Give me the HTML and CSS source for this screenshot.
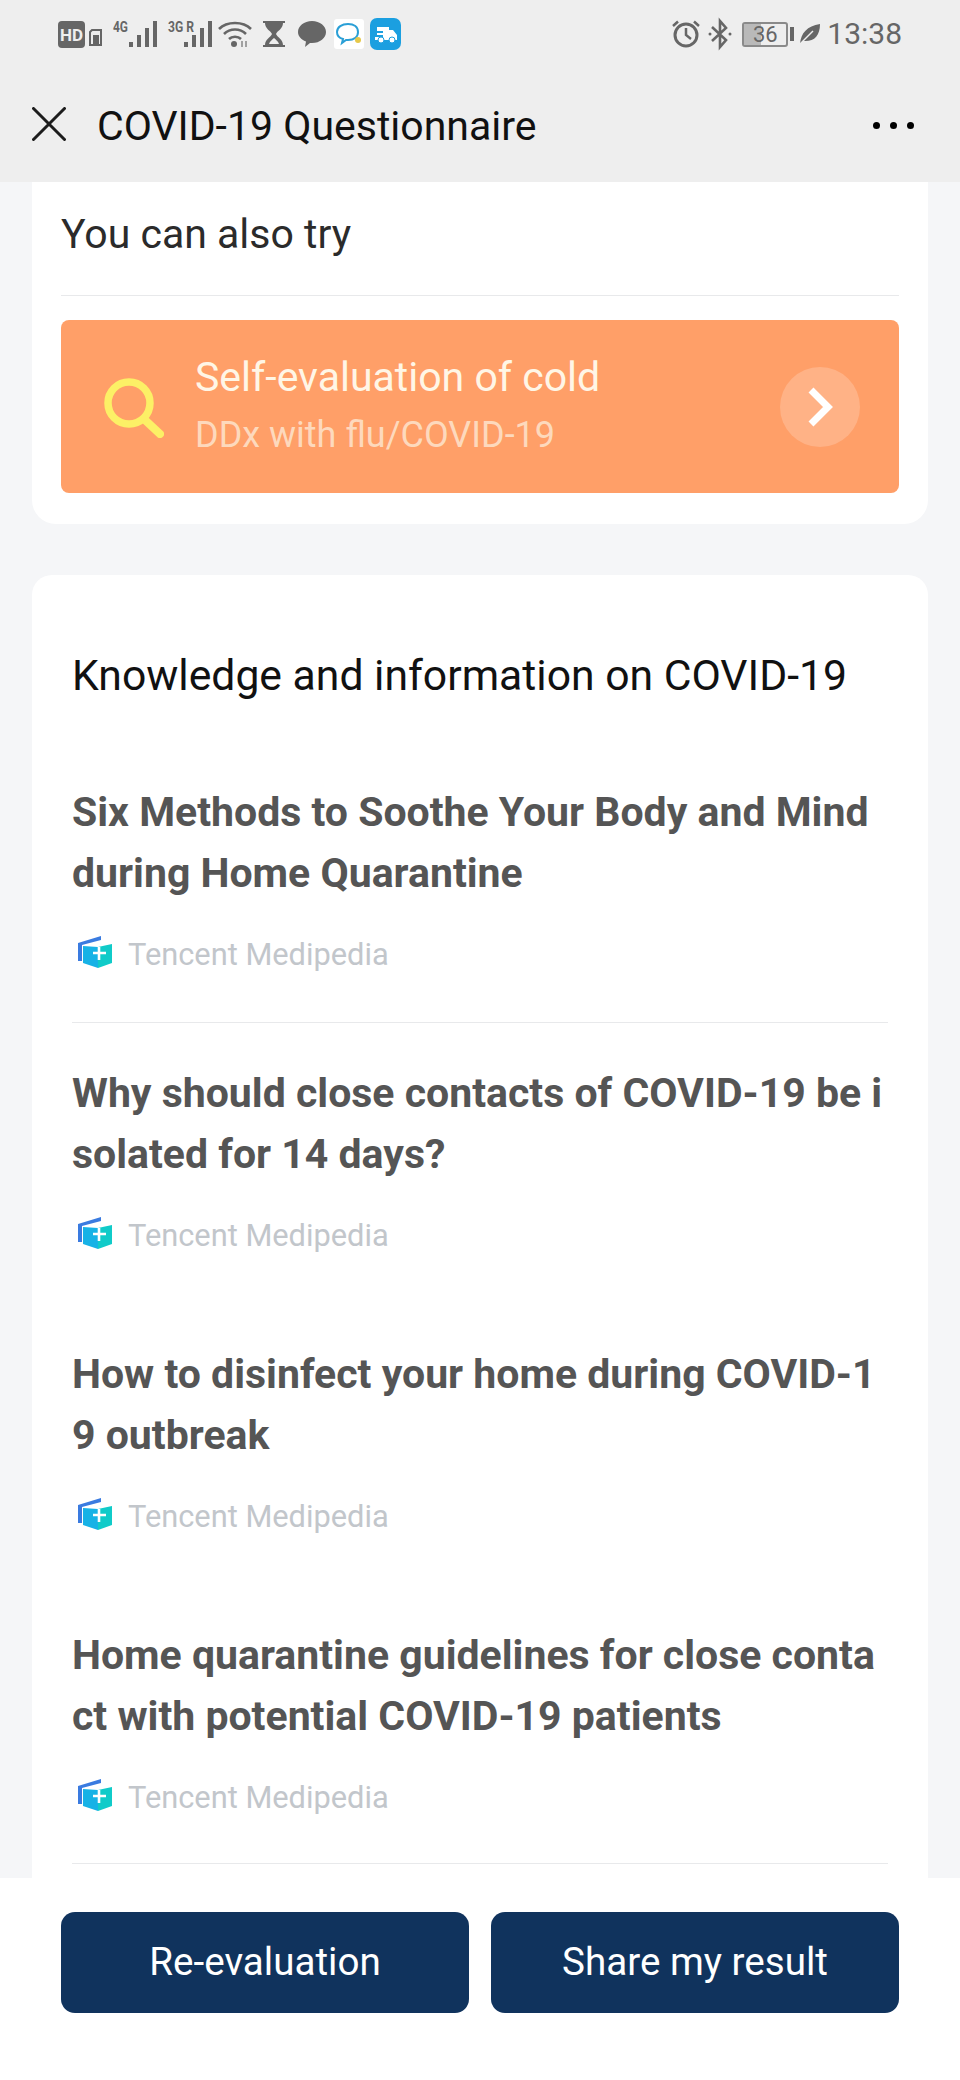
FILE: index.html
```html
<!DOCTYPE html>
<html lang="en">
<head>
<meta charset="utf-8">
<title>COVID-19 Questionnaire</title>
<link rel="stylesheet" href="styles.css">
</head>
<body>
<div class="page">
  <header class="top">
    <div class="status">
      <div class="status-left">
        <svg class="ic" width="27" height="27" viewBox="0 0 27 27"><rect width="27" height="27" rx="4" fill="#666"/><text x="13.5" y="20" class="hd">HD</text></svg>
        <svg class="ic sim" width="13" height="17" viewBox="0 0 13 17"><path d="M1 3 3 1h9v15H1z" fill="none" stroke="#666" stroke-width="2"/><rect x="4" y="6" width="6" height="9" fill="#666"/></svg>
        <svg class="ic net" width="46" height="28" viewBox="0 0 46 28"><text x="0" y="12" class="nt" textLength="15" lengthAdjust="spacingAndGlyphs">4G</text><g fill="#666"><rect x="16" y="22" width="4" height="5"/><rect x="24" y="15" width="4" height="12"/><rect x="32" y="8" width="4" height="19"/><rect x="40" y="1" width="4" height="26"/></g></svg>
        <svg class="ic net2" width="46" height="28" viewBox="0 0 46 28"><text x="0" y="12" class="nt" textLength="26" lengthAdjust="spacingAndGlyphs">3G R</text><g fill="#666"><rect x="16" y="22" width="4" height="5"/><rect x="24" y="15" width="4" height="12"/><rect x="32" y="8" width="4" height="19"/><rect x="40" y="1" width="4" height="26"/></g></svg>
        <svg class="ic wifi" width="34" height="28" viewBox="0 0 34 28"><g fill="none" stroke="#666" stroke-width="2.6"><path d="M1 9C9 1 25 1 33 9"/><path d="M6 14C12 8 22 8 28 14"/><path d="M11 19C14 16 20 16 23 19"/></g><circle cx="16" cy="24" r="3" fill="#666"/><path d="M24 21v6M28 21v6" stroke="#888" stroke-width="1.500"/></svg>
        <svg class="ic glass" width="22" height="28" viewBox="0 0 22 28"><path d="M0 1h22v2h-2c0 6-6 8-7 11 1 3 7 5 7 11h2v2H0v-2h2c0-6 6-8 7-11C8 11 2 9 2 3H0z" fill="#666"/><path d="M6 24c1-3 3-4 5-6 2 2 4 3 5 6z" fill="#eee"/></svg>
        <svg class="ic bubble" width="30" height="28" viewBox="0 0 30 28"><path d="M15 1c8 0 14 5 14 11s-6 11-14 11l-2 0-5 4 1-5.500C4 19.500 1 16 1 12 1 6 7 1 15 1z" fill="#666"/></svg>
        <span class="app-white"><svg width="28" height="24" viewBox="0 0 28 24"><path d="M13 2c6 0 10 3 10 8s-4 8-10 8h-2l-4 3 1-4C4 16 2 13 2 10c0-5 5-8 11-8z" fill="none" stroke="#2a9fd6" stroke-width="2"/><circle cx="23" cy="18" r="3" fill="#e6c84a"/></svg></span>
        <span class="app-blue"><svg width="24" height="20" viewBox="0 0 24 20"><path d="M3 3h12v3h4l4 5v5H1v-3h8v-2H3V9h6V7H3z" fill="#fff"/><circle cx="7" cy="16" r="3" fill="#fff" stroke="#1b9fe0"/><circle cx="18" cy="16" r="3" fill="#fff" stroke="#1b9fe0"/></svg></span>
      </div>
      <div class="status-right">
        <svg class="ic" width="30" height="28" viewBox="0 0 30 28"><circle cx="15" cy="15" r="11" fill="none" stroke="#666" stroke-width="3"/><path d="M15 8v7l5 4" fill="none" stroke="#666" stroke-width="2.500"/><path d="M2 6 7 1.500M28 6l-5-4.500" stroke="#666" stroke-width="2.500"/></svg>
        <svg class="ic bt" width="24" height="30" viewBox="0 0 24 30"><path d="M4 8l14 13-6 7V2l6 7L4 22" fill="none" stroke="#666" stroke-width="2.600"/><circle cx="2" cy="15" r="1.500" fill="#666"/><circle cx="22" cy="15" r="1.500" fill="#666"/></svg>
        <span class="batt"><span class="batt-fill"></span><span class="batt-num">36</span></span>
        <span class="batt-tip"></span>
        <svg class="ic leaf" width="22" height="22" viewBox="0 0 22 22"><path d="M1 21C2 10 8 3 21 1c0 12-6 18-17 17z" fill="#666"/><path d="M1 21 14 8" stroke="#eee" stroke-width="1.500"/></svg>
        <span class="clock">13:38</span>
      </div>
    </div>
    <div class="nav">
      <svg class="close" width="34" height="34" viewBox="0 0 34 34"><path d="M1.500 1.500 32.500 32.500M32.500 1.500 1.500 32.500" stroke="#1c1c1c" stroke-width="3" stroke-linecap="round"/></svg>
      <div class="nav-title">COVID-19 Questionnaire</div>
      <div class="dots"><i></i><i></i><i></i></div>
    </div>
  </header>

  <main class="main">
    <section class="card try">
      <h2 class="try-title">You can also try</h2>
      <div class="promo">
        <svg class="loupe" width="60" height="60" viewBox="0 0 60 60"><circle cx="25" cy="25" r="21" fill="none" stroke="#fcf066" stroke-width="7.500"/><path d="M41 42 56 56" stroke="#fcf066" stroke-width="8" stroke-linecap="round"/></svg>
        <div class="promo-text">
          <div class="promo-main">Self-evaluation of cold</div>
          <div class="promo-sub">DDx with flu/COVID-19</div>
        </div>
        <div class="promo-go"><svg width="28" height="42" viewBox="0 0 28 42"><path d="M5 4 22 21 5 38" fill="none" stroke="#fff" stroke-width="7"/></svg></div>
      </div>
    </section>

    <section class="card know">
      <h2 class="know-title">Knowledge and information on COVID-19</h2>
      <article class="item">
        <h3 class="item-title">Six Methods to Soothe Your Body and Mind during Home Quarantine</h3>
        <div class="source"><svg class="book" width="34" height="34" viewBox="0 0 34 34"><path d="M0 8 23 1v4L4 10v16H0z" fill="#3a7be0"/><path d="M5 11 20 12v21L5 28z" fill="#17b2e6"/><path d="M20 12 34 9v19l-14 5z" fill="#10cbc9"/><path d="M21 12v13M15 18h13" stroke="#fff" stroke-width="2.600"/></svg><span>Tencent Medipedia</span></div>
      </article>
      <article class="item ruled">
        <h3 class="item-title">Why should close contacts of COVID-19 be isolated for 14 days?</h3>
        <div class="source"><svg class="book" width="34" height="34" viewBox="0 0 34 34"><path d="M0 8 23 1v4L4 10v16H0z" fill="#3a7be0"/><path d="M5 11 20 12v21L5 28z" fill="#17b2e6"/><path d="M20 12 34 9v19l-14 5z" fill="#10cbc9"/><path d="M21 12v13M15 18h13" stroke="#fff" stroke-width="2.600"/></svg><span>Tencent Medipedia</span></div>
      </article>
      <article class="item">
        <h3 class="item-title">How to disinfect your home during COVID-19 outbreak</h3>
        <div class="source"><svg class="book" width="34" height="34" viewBox="0 0 34 34"><path d="M0 8 23 1v4L4 10v16H0z" fill="#3a7be0"/><path d="M5 11 20 12v21L5 28z" fill="#17b2e6"/><path d="M20 12 34 9v19l-14 5z" fill="#10cbc9"/><path d="M21 12v13M15 18h13" stroke="#fff" stroke-width="2.600"/></svg><span>Tencent Medipedia</span></div>
      </article>
      <article class="item">
        <h3 class="item-title">Home quarantine guidelines for close contact with potential COVID-19 patients</h3>
        <div class="source"><svg class="book" width="34" height="34" viewBox="0 0 34 34"><path d="M0 8 23 1v4L4 10v16H0z" fill="#3a7be0"/><path d="M5 11 20 12v21L5 28z" fill="#17b2e6"/><path d="M20 12 34 9v19l-14 5z" fill="#10cbc9"/><path d="M21 12v13M15 18h13" stroke="#fff" stroke-width="2.600"/></svg><span>Tencent Medipedia</span></div>
      </article>
      <div class="item-end"></div>
    </section>
  </main>

  <footer class="actions">
    <button class="btn">Re-evaluation</button>
    <button class="btn">Share my result</button>
  </footer>
</div>
</body>
</html>
```

FILE: styles.css
```css
* { box-sizing: border-box; }
html, body { margin: 0; padding: 0; }
body { font-family: Roboto, "Liberation Sans", sans-serif; background: #f5f6f8; }
.page { width: 960px; height: 2080px; display: flex; flex-direction: column; overflow: hidden; background: #f5f6f8; }

.top { height: 182px; flex: none; background: #eeeeee; }
.status { height: 68px; padding: 17px 58px 0 58px; display: flex; justify-content: space-between; align-items: flex-start; }
.status-left, .status-right { display: flex; align-items: center; height: 34px; }
.ic { display: block; flex: none; overflow: visible; }
.hd { font: 700 17px Roboto, sans-serif; fill: #eee; text-anchor: middle; }
.nt { font: 700 14px Roboto, sans-serif; fill: #666; }
.sim { margin: 6px 0 0 4px; }
.net { margin-left: 11px; }
.net2 { margin-left: 9px; }
.wifi { margin-left: 4px; }
.glass { margin-left: 11px; }
.bubble { margin-left: 12px; }
.app-white { width: 30px; height: 30px; margin-left: 7px; background: #fff; border-radius: 3px; display: flex; align-items: center; justify-content: center; }
.app-blue { width: 31px; height: 32px; margin-left: 6px; background: #1b9fe0; border-radius: 7px; display: flex; align-items: center; justify-content: center; }
.bt { margin-left: 7px; }
.batt { position: relative; width: 46px; height: 25px; margin-left: 10px; border: 2px solid #8a8a8a; border-radius: 3px; display: block; }
.batt-fill { position: absolute; left: 0; top: 0; bottom: 0; width: 17px; background: #b9b9b9; }
.batt-num { position: absolute; left: 0; right: 0; top: 0; text-align: center; font-size: 22px; line-height: 21px; color: #666; }
.batt-tip { width: 4px; height: 14px; margin-left: 2px; background: #666; display: block; }
.leaf { margin-left: 5px; }
.clock { margin-left: 6px; font-size: 30px; color: #666; line-height: 34px; }

.nav { height: 114px; padding: 0 32px; display: flex; align-items: center; }
.close { flex: none; margin-top: -2px; }
.nav-title { margin-left: 31px; font-size: 41px; color: #111; font-weight: 400; margin-top: 1px; }
.dots { margin-left: auto; display: flex; gap: 10px; margin-right: 14px; margin-top: 1px; }
.dots i { display: block; width: 7px; height: 7px; border-radius: 50%; background: #000; }

.main { flex: 1 1 auto; min-height: 0; overflow: hidden; padding: 0 32px; }
.card { background: #fff; }
.try { height: 342px; border-radius: 0 0 24px 24px; padding: 0 29px; margin-bottom: 51px; }
.try-title { margin: 0; height: 114px; border-bottom: 1px solid #e8e9eb; font-size: 41px; line-height: 104px; font-weight: 400; color: #2b2b2b; }
.promo { height: 173px; margin-top: 24px; padding: 0 39px 0 43px; background: #ff9f68; border-radius: 8px; display: flex; align-items: center; }
.loupe { flex: none; margin-top: 2px; }
.promo-text { margin-left: 31px; flex: 1; }
.promo-main { font-size: 41px; line-height: 48px; color: #fff6e6; margin-top: -5px; }
.promo-sub { margin-top: 14px; font-size: 36px; line-height: 40px; color: #fdd9bd; }
.promo-go { width: 80px; height: 80px; border-radius: 50%; background: rgba(255,255,255,.2); display: flex; align-items: center; justify-content: center; }

.know { border-radius: 20px 20px 0 0; padding: 71px 40px 0; min-height: 1400px; }
.know-title { margin: 0 0 37px; font-size: 42.7px; line-height: 58px; font-weight: 400; color: #111; }
.item { padding: 40px 0 48px; border-top: 1px solid transparent; }
.item-title { margin: 0; font-size: 41px; line-height: 61px; font-weight: 700; color: #555; word-break: break-all; }
.source { margin-top: 30px; height: 40px; display: flex; align-items: center; font-size: 30.8px; color: #c2c6cb; }
.book { margin-left: 6px; margin-right: 16px; margin-top: -5px; flex: none; }
.item-end { border-top: 1px solid #e8e9eb; margin-top: -2px; }
.ruled { border-top-color: #e8e9eb; }

.actions { flex: none; height: 202px; background: #fff; padding: 34px 61px 0; display: flex; gap: 22px; align-items: flex-start; }
.btn { flex: 1; height: 101px; padding: 0 0 2px; border: 0; border-radius: 14px; background: #10335d; color: #fff; font: 400 38.6px Roboto, sans-serif; }
```
